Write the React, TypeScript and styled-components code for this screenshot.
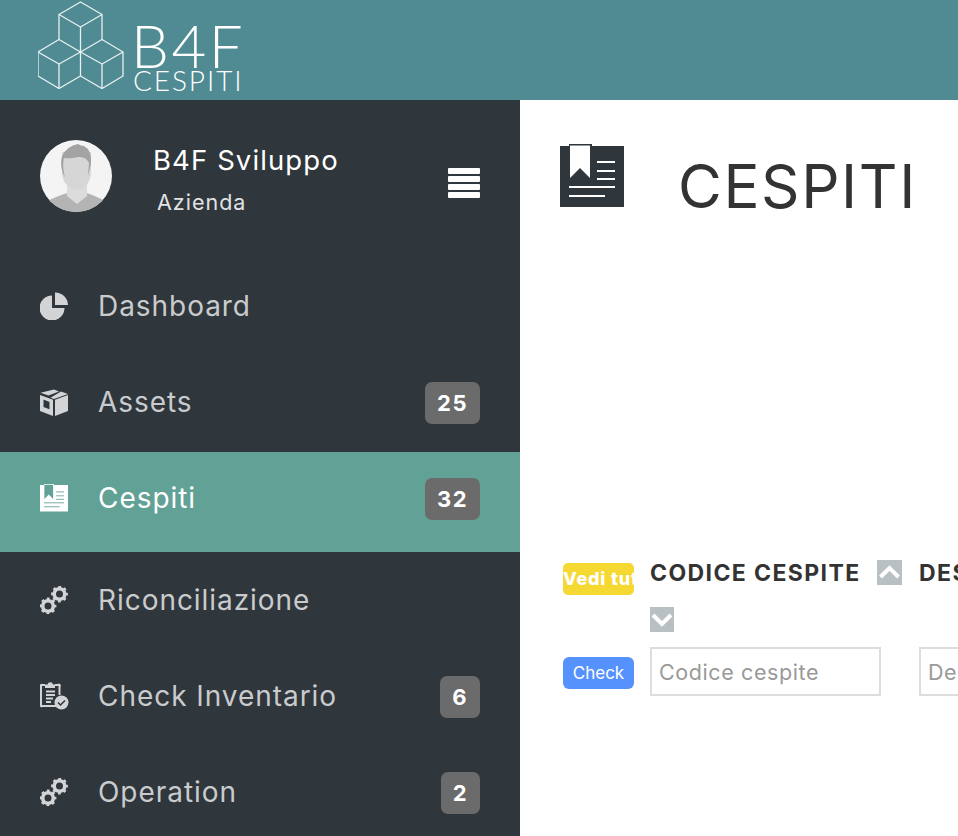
import React from 'react'
import styled, { createGlobalStyle } from 'styled-components'

const FONT = `"Inter", "Noto Sans", "Liberation Sans", sans-serif`

const GlobalStyle = createGlobalStyle`
html, body {
  margin: 0;
  padding: 0;
  background: #fff;
  overflow: hidden;
}
* {
  box-sizing: border-box;
}
`

const LogoCubes = () => (
  <svg width="86" height="88" viewBox="0 0 86 88" fill="none" stroke="#e8f0f1" strokeWidth="1.3" strokeLinejoin="round">
    <path d="M42.500 1 L64 13.500 L42.500 26 L21 13.500 Z" />
    <path d="M21 13.500 V38.500 M64 13.500 V38.500 M42.500 26 V51" />
    <path d="M21 38.500 L42.500 51 L21 63 L0 51 Z" />
    <path d="M64 38.500 L85 51 L64 63 L42.500 51 Z" />
    <path d="M0 51 V75 L21 87.500 L42.500 75 L64 87.500 L85 75 V51" />
    <path d="M21 63 V87.500 M64 63 V87.500 M42.500 51 V75" />
  </svg>
)

const Avatar = () => (
  <svg width="72" height="72" viewBox="0 0 72 72">
    <clipPath id="avatarClip"><circle cx="36" cy="36" r="36" /></clipPath>
    <g clipPath="url(#avatarClip)">
      <rect width="72" height="72" fill="#f4f4f4" />
      <path d="M0 72 V66 Q6 60 27 53 L37 63 L47 53 Q66 60 72 66 V72 Z" fill="#b4b4b4" />
      <path d="M27 42 H47 V56 L37 64 L27 56 Z" fill="#dcdcdc" />
      <path d="M22 12 H51 V34 Q49 48 37 50 Q24 48 22 34 Z" fill="#d6d6d6" />
      <path d="M25 38 Q19 26 22 16 Q27 6 38 4 Q41 6 44 6 Q52 10 51 24 L48 36 L49 23 Q46 16 38 17 Q30 19 24 18 Q22 26 25 38 Z" fill="#a3a3a3" />
    </g>
  </svg>
)

const HamburgerIcon = () => (
  <svg width="32" height="30" viewBox="0 0 32 30" fill="#fff">
    <rect y="0" width="32" height="6" rx="1" />
    <rect y="8" width="32" height="6" rx="1" />
    <rect y="16" width="32" height="6" rx="1" />
    <rect y="24" width="32" height="6" rx="1" />
  </svg>
)

const PieIcon = () => (
  <svg width="28" height="28" viewBox="0 0 28 28" fill="currentColor">
    <path d="M12 3.500 V16 H24.500 A12.500 12.500 0 1 1 12 3.500 Z" />
    <path d="M15 0.500 A12.800 12.800 0 0 1 28 13 H15 Z" />
  </svg>
)

const BoxIcon = () => (
  <svg width="28" height="28" viewBox="0 0 28 28" fill="currentColor">
    <path d="M14 0.500 L19 2.500 L8.500 6.500 L0.500 3.800 Z" transform="translate(0 1)" />
    <path d="M21 3.500 L28 6 L14 11 L10.500 9.700 Z" />
    <path d="M0 7 L13 11.700 V28 L0 23 Z M3.500 11.500 V19 L9.500 21.300 V14 Z" fillRule="evenodd" />
    <path d="M15 11.700 L28 7 V23 L15 28 Z" />
  </svg>
)

const BookletIcon = ({ size, paper, ink }: { size: number; paper: string; ink: string }) => (
  <svg width={size} height={size} viewBox="0 0 64 64">
    <path d="M0 2 H9 V0 H32 V2 H64 V63 H0 Z" fill={paper} />
    <path d="M10 1.500 H30 V34 L20 24 L10 34 Z" fill={ink} />
    <path d="M37 18 H55 M37 27 H55 M37 35 H55 M9 43 H55 M9 52 H45" stroke={ink} strokeWidth="2" />
  </svg>
)

const Gear = ({ cx, cy }: { cx: number; cy: number }) => (
  <g fill="none" stroke="currentColor">
    <circle cx={cx} cy={cy} r="5.300" strokeWidth="3.600" />
    <circle cx={cx} cy={cy} r="7.200" strokeWidth="2.400" strokeDasharray="2.800 2.850" strokeDashoffset="1.400" />
  </g>
)

const GearsIcon = () => (
  <svg width="28" height="28" viewBox="0 0 28 28">
    <Gear cx={19.500} cy={8} />
    <Gear cx={8} cy={20} />
  </svg>
)

const ClipboardIcon = () => (
  <svg width="30" height="30" viewBox="0 0 30 30" fill="none">
    <path d="M5 4 H2.500 A1 1 0 0 0 1 5.500 V23.500 A1 1 0 0 0 2.500 25 H16 M15 4 H18 A1 1 0 0 1 19.500 5.500 V14" stroke="currentColor" strokeWidth="2" />
    <path d="M5 7 V3.500 H7.500 A2.800 2.800 0 0 1 13 3.500 H15 V7 Z" fill="currentColor" />
    <path d="M6 10.500 H15 M6 14 H15 M6 17.500 H13 M6 21 H11" stroke="currentColor" strokeWidth="2" />
    <circle cx="21.500" cy="21.500" r="7" fill="currentColor" />
    <path d="M18 21.500 L20.500 24 L25 19.500" stroke="#2f363c" strokeWidth="1.500" />
  </svg>
)

const ChevronUp = () => (
  <svg width="25" height="25" viewBox="0 0 25 25">
    <rect width="25" height="25" fill="#b9c0c3" />
    <path d="M3.500 17 L12.500 8 L21.500 17" stroke="#fff" strokeWidth="4" fill="none" />
  </svg>
)

const ChevronDown = () => (
  <svg width="24" height="25" viewBox="0 0 24 25">
    <rect width="24" height="25" fill="#b9c0c3" />
    <path d="M3 8 L12 17 L21 8" stroke="#fff" strokeWidth="4" fill="none" />
  </svg>
)

const menu = [
  { label: 'Dashboard', icon: <PieIcon /> },
  { label: 'Assets', icon: <BoxIcon />, badge: '25' },
  { label: 'Cespiti', icon: <BookletIcon size={28} paper="#ffffff" ink="#62a195" />, badge: '32', active: true },
  { label: 'Riconciliazione', icon: <GearsIcon /> },
  { label: 'Check Inventario', icon: <ClipboardIcon />, badge: '6' },
  { label: 'Operation', icon: <GearsIcon />, badge: '2' },
]

const App = () => {
  return (
    <Page>
      <GlobalStyle />
      <Header>
        <LogoCubes />
        <LogoText>
          <LogoBig>B4F</LogoBig>
          <LogoSmall>CESPITI</LogoSmall>
        </LogoText>
      </Header>
      <Body>
        <Sidebar>
          <Profile>
            <Avatar />
            <ProfileText>
              <ProfileName>B4F Sviluppo</ProfileName>
              <ProfileCompany>Azienda</ProfileCompany>
            </ProfileText>
            <HamburgerIcon />
          </Profile>
          <Menu>
            {menu.map((item) => (
              <MenuItem key={item.label} $active={item.active}>
                <MenuIcon $active={item.active}>{item.icon}</MenuIcon>
                <MenuLabel $active={item.active}>{item.label}</MenuLabel>
                {item.badge && <Badge>{item.badge}</Badge>}
              </MenuItem>
            ))}
          </Menu>
        </Sidebar>
        <Main>
          <TitleRow>
            <BookletIcon size={64} paper="#2f363c" ink="#ffffff" />
            <Title>CESPITI</Title>
          </TitleRow>
          <Filters>
            <YellowButton>Vedi tutti</YellowButton>
            <ColumnHead>
              <ColumnName>CODICE CESPITE</ColumnName>
              <ChevronUp />
              <ChevronDown />
            </ColumnHead>
            <ColumnHead>
              <ColumnName>DESCRIZIONE</ColumnName>
            </ColumnHead>
            <BlueButton>Check</BlueButton>
            <FilterInput placeholder="Codice cespite" />
            <FilterInput placeholder="Descrizione" />
          </Filters>
        </Main>
      </Body>
    </Page>
  )
}

export default App

const Page = styled.div`
width: 958px;
height: 836px;
overflow: hidden;
font-family: ${FONT};
`

const Header = styled.div`
height: 100px;
background: #508a92;
display: flex;
align-items: flex-start;
padding: 1px 0 0 38px;
gap: 7px;
`

const LogoText = styled.div`
display: flex;
flex-direction: column;
color: #fff;
padding-top: 21px;
`

const LogoBig = styled.div`
font-family: "Lato", sans-serif;
font-weight: 300;
font-size: 60px;
line-height: 46px;
letter-spacing: 2.5px;
`

const LogoSmall = styled.div`
font-family: "Lato", sans-serif;
font-weight: 300;
font-size: 28px;
line-height: 24px;
letter-spacing: 1.9px;
margin-left: 2px;
`

const Body = styled.div`
display: flex;
height: 736px;
`

const Sidebar = styled.div`
width: 520px;
flex-shrink: 0;
background: #2f363c;
`

const Profile = styled.div`
display: flex;
align-items: flex-start;
padding: 40px 40px 0 40px;
height: 158px;

svg:last-child {
  margin-top: 28px;
}
`

const ProfileText = styled.div`
flex: 1;
padding: 2px 0 0 41px;
color: #fff;
`

const ProfileName = styled.div`
font-size: 27.5px;
line-height: 36px;
letter-spacing: 1.1px;
`

const ProfileCompany = styled.div`
font-size: 21.5px;
line-height: 30px;
letter-spacing: 1px;
margin: 9px 0 0 4px;
color: #e0e2e3;
`

const Menu = styled.div`
display: flex;
flex-direction: column;
`

const MenuItem = styled.div<{ $active?: boolean }>`
display: flex;
align-items: center;
height: ${(p) => (p.$active ? '100px' : '96px')};
margin-top: ${(p) => (p.$active ? '2px' : '0')};
padding: 0 40px ${(p) => (p.$active ? '8px' : '0')};
background: ${(p) => (p.$active ? '#62a195' : 'transparent')};
`

const MenuIcon = styled.div<{ $active?: boolean }>`
width: 58px;
display: flex;
align-items: center;
color: ${(p) => (p.$active ? '#fff' : '#d2d4d6')};
`

const MenuLabel = styled.div<{ $active?: boolean }>`
flex: 1;
font-size: 28px;
letter-spacing: 0.95px;
color: ${(p) => (p.$active ? '#fff' : '#c9cbcd')};
`

const Badge = styled.div`
height: 42px;
margin-top: 1px;
padding: 0 12px;
border-radius: 7px;
background: #6b6b6b;
color: #fff;
font-size: 22px;
font-weight: 700;
letter-spacing: 1.5px;
display: flex;
align-items: center;
justify-content: center;
`

const Main = styled.div`
flex: 1;
min-width: 0;
padding: 44px 0 0 40px;
overflow: hidden;
`

const TitleRow = styled.div`
display: flex;
align-items: flex-start;
gap: 54px;
height: 416px;
`

const Title = styled.h1`
margin: 6px 0 0;
font-size: 60px;
line-height: 72px;
font-weight: 400;
letter-spacing: 1.6px;
color: #333;
`

const Filters = styled.div`
display: grid;
grid-template-columns: 71px 231px 231px;
column-gap: 16px;
row-gap: 15px;
margin-left: 3px;

> :nth-child(3n) {
  margin-left: 22px;
}
`

const YellowButton = styled.div`
width: 71px;
height: 32px;
margin-top: 3px;
border-radius: 5px;
background: #f5d832;
color: #fff;
font-size: 18px;
font-weight: 800;
line-height: 32px;
letter-spacing: 0.8px;
white-space: nowrap;
overflow: hidden;
`

const ColumnHead = styled.div`
display: flex;
flex-wrap: wrap;
align-items: flex-start;
column-gap: 16px;
row-gap: 21px;
width: 270px;
white-space: nowrap;
`

const ColumnName = styled.span`
font-size: 23px;
font-weight: 700;
line-height: 26px;
letter-spacing: 1.4px;
color: #333;
`

const BlueButton = styled.div`
width: 71px;
height: 32px;
margin-top: 10px;
border-radius: 6px;
background: #5692fd;
color: #fff;
font-size: 17px;
line-height: 32px;
text-align: center;
`

const FilterInput = styled.input`
width: 231px;
height: 49px;
border: 2px solid #ddd;
background: #fff;
padding: 0 7px;
font-family: ${FONT};
font-size: 21.5px;
letter-spacing: 0.6px;
outline: none;

&::placeholder {
  color: #999;
}
`
